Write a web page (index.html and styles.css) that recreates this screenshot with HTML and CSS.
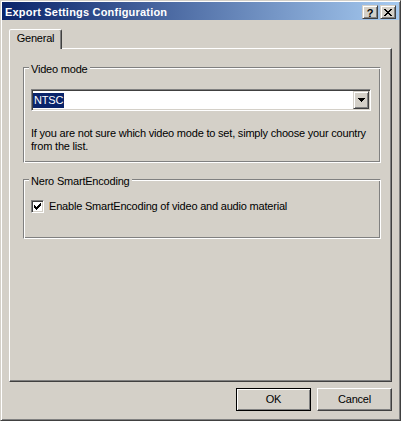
FILE: index.html
```html
<!DOCTYPE html>
<html>
<head>
<meta charset="utf-8">
<title>Export Settings Configuration</title>
<link rel="stylesheet" href="styles.css">
</head>
<body>
<div class="window">
  <div class="titlebar">
    <span class="title-text">Export Settings Configuration</span>
    <div class="caption-buttons">
      <div class="cap-btn help-btn">?</div>
      <div class="cap-btn close-btn">
        <svg class="close-glyph" width="8" height="7" viewBox="0 0 8 7" shape-rendering="crispEdges"><path d="M0 0h2v1h-2z M6 0h2v1h-2z M1 1h2v1h-2z M5 1h2v1h-2z M2 2h4v1h-4z M3 3h2v1h-2z M2 4h4v1h-4z M1 5h2v1h-2z M5 5h2v1h-2z M0 6h2v1h-2z M6 6h2v1h-2z" fill="#000"/></svg>
      </div>
    </div>
  </div>
  <div class="client">
    <div class="tabs">
      <div class="tab">General</div>
    </div>
    <div class="panel">
      <div class="group group-video">
        <div class="group-title">Video mode</div>
        <div class="combo">
          <div class="combo-field"><span class="combo-sel">NTSC</span></div>
          <div class="combo-btn">
            <svg width="7" height="4" viewBox="0 0 7 4" shape-rendering="crispEdges"><path d="M0 0h7v1h-7z M1 1h5v1h-5z M2 2h3v1h-3z M3 3h1v1h-1z" fill="#000"/></svg>
          </div>
        </div>
        <p class="hint">If you are not sure which video mode to set, simply choose your country<br>from the list.</p>
      </div>
      <div class="group group-nero">
        <div class="group-title">Nero SmartEncoding</div>
        <div class="check-row">
          <span class="checkbox">
            <svg width="7" height="7" viewBox="0 0 7 7" shape-rendering="crispEdges"><path d="M6 0h1v1h-1z M5 1h2v1h-2z M0 2h1v1h-1z M4 2h3v1h-3z M0 3h2v1h-2z M3 3h3v1h-3z M0 4h5v1h-5z M1 5h3v1h-3z M2 6h1v1h-1z" fill="#000"/></svg>
          </span>
          <span class="check-label">Enable SmartEncoding of video and audio material</span>
        </div>
      </div>
    </div>
    <div class="buttons">
      <button class="btn btn-default">OK</button>
      <button class="btn">Cancel</button>
    </div>
  </div>
</div>
</body>
</html>
```
FILE: styles.css
```css
* { box-sizing: border-box; }
html, body { margin: 0; padding: 0; }
body {
  background: #D4D0C8;
  font-family: "Liberation Sans", Arial, sans-serif;
  font-size: 11px;
  line-height: 13px;
  letter-spacing: -0.2px;
  color: #000;
}
.window {
  width: 401px;
  height: 421px;
  padding: 1px;
  border: 1px solid;
  border-color: #D4D0C8 #404040 #404040 #D4D0C8;
  box-shadow: inset 1px 1px #fff, inset -1px -1px #808080;
  background: #D4D0C8;
  display: flex;
  flex-direction: column;
}
.titlebar {
  height: 18px;
  flex: none;
  display: flex;
  align-items: flex-start;
  padding-left: 3px;
  background: linear-gradient(to right, #0A246A, #A6CAF0);
}
.title-text {
  margin-top: 4px;
  color: #fff;
  font-weight: bold;
  letter-spacing: 0.2px;
  white-space: nowrap;
}
.caption-buttons {
  margin-left: auto;
  margin-top: 3px;
  margin-right: 3px;
  display: flex;
  gap: 2px;
}
.cap-btn {
  width: 16px;
  height: 14px;
  background: #D4D0C8;
  border: 1px solid;
  border-color: #D4D0C8 #404040 #404040 #D4D0C8;
  box-shadow: inset 1px 1px #fff, inset -1px -1px #808080;
  display: flex;
  align-items: center;
  justify-content: center;
}
.help-btn {
  font-weight: bold;
  font-size: 11px;
  line-height: 10px;
  letter-spacing: 0;
  padding-top: 1px;
}
.close-glyph { display: block; }
.client {
  flex: 1;
  display: flex;
  flex-direction: column;
  padding: 9px 7px 0 7px;
}
.tabs {
  display: flex;
  height: 20px;
  margin-bottom: -1px;
  position: relative;
  z-index: 1;
}
.tab {
  width: 53px;
  height: 20px;
  background: #D4D0C8;
  border: 1px solid;
  border-bottom: 0;
  border-color: #fff #404040 transparent #fff;
  border-radius: 2px 2px 0 0;
  box-shadow: inset -1px 0 #808080;
  text-align: center;
  padding-top: 2px;
}
.panel {
  height: 334px;
  flex: none;
  border: 1px solid;
  border-color: #fff #404040 #404040 #fff;
  box-shadow: inset -1px -1px #808080;
  padding: 18px 0 0 13px;
}
.group {
  width: 358px;
  border: 1px solid;
  border-color: #808080 #fff #fff #808080;
  box-shadow: inset 1px 1px #fff, inset -1px -1px #808080;
}
.group-title {
  width: fit-content;
  margin: -5px 0 0 5px;
  padding: 0 2px;
  background: #D4D0C8;
  white-space: nowrap;
}
.group-video { padding-bottom: 9px; }
.group-nero { margin-top: 16px; padding-bottom: 25px; }
.combo {
  width: 340px;
  height: 22px;
  margin: 13px 0 0 7px;
  display: flex;
  padding: 1px;
  background: #fff;
  border: 1px solid;
  border-color: #808080 #fff #fff #808080;
  box-shadow: inset 1px 1px #404040, inset -1px -1px #D4D0C8;
}
.combo-field {
  flex: 1;
  display: flex;
  align-items: center;
}
.combo-sel {
  background: #0A246A;
  color: #fff;
  padding: 1px 1px;
  line-height: 13px;
}
.combo-btn {
  width: 16px;
  flex: none;
  background: #D4D0C8;
  border: 1px solid;
  border-color: #D4D0C8 #404040 #404040 #D4D0C8;
  box-shadow: inset 1px 1px #fff, inset -1px -1px #808080;
  display: flex;
  align-items: center;
  justify-content: center;
}
.combo-btn svg { display: block; }
.hint {
  margin: 16px 0 0 7px;
  white-space: nowrap;
}
.check-row {
  display: flex;
  align-items: center;
  gap: 5px;
  height: 13px;
  margin: 12px 0 0 7px;
}
.checkbox {
  width: 13px;
  height: 13px;
  flex: none;
  padding: 2px;
  background: #fff;
  border: 1px solid;
  border-color: #808080 #fff #fff #808080;
  box-shadow: inset 1px 1px #404040, inset -1px -1px #D4D0C8;
}
.checkbox svg { display: block; }
.check-label { white-space: nowrap; }
.buttons {
  display: flex;
  justify-content: flex-end;
  gap: 6px;
  margin-top: 6px;
}
.btn {
  width: 75px;
  height: 23px;
  padding: 0;
  font: inherit;
  letter-spacing: inherit;
  color: #000;
  background: #D4D0C8;
  border: 1px solid;
  border-color: #fff #404040 #404040 #fff;
  box-shadow: inset -1px -1px #808080;
  border-radius: 0;
}
.btn-default {
  border-color: #000;
  box-shadow: inset 1px 1px #fff, inset -1px -1px #808080;
}
```
